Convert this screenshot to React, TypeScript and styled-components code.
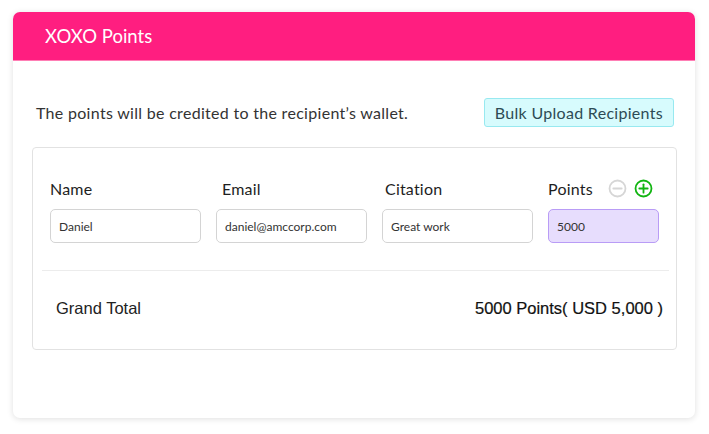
import styled, { createGlobalStyle } from "styled-components";

const GlobalStyle = createGlobalStyle`
  html, body {
    margin: 0;
    padding: 0;
    background: #ffffff;
  }
  body {
    font-family: Lato, "Noto Sans", sans-serif;
  }
`;

type Recipient = {
  name: string;
  email: string;
  citation: string;
  points: string;
};

const recipients: Recipient[] = [
  {
    name: "Daniel",
    email: "daniel@amccorp.com",
    citation: "Great work",
    points: "5000",
  },
];

function CircleIcon({ color, plus }: { color: string; plus?: boolean }) {
  return (
    <svg width="19" height="19" viewBox="0 0 20 20" fill="none">
      <circle cx="10" cy="10" r="8.4" stroke={color} strokeWidth="1.9" />
      <path d="M5.6 10h8.8" stroke={color} strokeWidth="1.9" strokeLinecap="round" />
      {plus && (
        <path d="M10 5.6v8.8" stroke={color} strokeWidth="1.9" strokeLinecap="round" />
      )}
    </svg>
  );
}

export default function App() {
  return (
    <Page>
      <GlobalStyle />
      <Card>
        <Header>XOXO Points</Header>
        <Body>
          <InfoRow>
            <Info>The points will be credited to the recipient’s wallet.</Info>
            <BulkButton>Bulk Upload Recipients</BulkButton>
          </InfoRow>
          <Panel>
            <Grid>
              <Label>Name</Label>
              <Label $shift={6}>Email</Label>
              <Label $shift={3}>Citation</Label>
              <PointsLabel>
                Points
                <Icons>
                  <CircleIcon color="#d6d6d6" />
                  <CircleIcon color="#12b512" plus />
                </Icons>
              </PointsLabel>
              {recipients.map((r) => [
                <Field key={r.email + "n"} defaultValue={r.name} />,
                <Field key={r.email + "e"} defaultValue={r.email} />,
                <Field key={r.email + "c"} defaultValue={r.citation} />,
                <Field key={r.email + "p"} defaultValue={r.points} $highlight />,
              ])}
            </Grid>
            <Divider />
            <TotalRow>
              <span>Grand Total</span>
              <Amount>5000 Points( USD 5,000 )</Amount>
            </TotalRow>
          </Panel>
        </Body>
      </Card>
    </Page>
  );
}

const Page = styled.div`
  padding: 12px 14px 16px 13px;
`;

const Card = styled.div`
  width: 682px;
  background: #fff;
  border-radius: 7px;
  overflow: hidden;
  box-shadow: 0 1px 6px rgba(0, 0, 0, 0.13);
`;

const Header = styled.div`
  height: 49px;
  background: #ff1e80;
  color: #fff;
  font-size: 18.5px;
  display: flex;
  align-items: center;
  padding-left: 32px;
  border-bottom: 1px solid #ff7fb5;
  box-sizing: border-box;
`;

const Body = styled.div`
  padding: 37px 18px 68px 19px;
`;

const InfoRow = styled.div`
  display: flex;
  justify-content: space-between;
  align-items: center;
  padding-left: 4px;
  padding-right: 3px;
`;

const Info = styled.p`
  margin: 0;
  font-size: 16px;
  letter-spacing: 0.3px;
  color: #333;
`;

const BulkButton = styled.button`
  height: 29px;
  padding: 0 10px;
  background: #d7fbfd;
  border: 1px solid #98e9f0;
  border-radius: 3px;
  font-family: Lato, "Noto Sans", sans-serif;
  font-size: 16px;
  letter-spacing: 0.3px;
  color: #2d4b55;
`;

const Panel = styled.div`
  margin-top: 20px;
  border: 1px solid #e2e2e2;
  border-radius: 4px;
  padding: 30px 7px 0 9px;
`;

const Grid = styled.div`
  display: grid;
  grid-template-columns: 151px 151px 151px 111px;
  column-gap: 15px;
  row-gap: 11px;
  padding-left: 8px;
`;

const Label = styled.div<{ $shift?: number }>`
  font-size: 16px;
  letter-spacing: 0.2px;
  color: #1e1e1e;
  height: 20px;
  display: flex;
  align-items: center;
  padding-left: ${({ $shift }) => $shift ?? 0}px;
`;

const PointsLabel = styled(Label)`
  gap: 15px;
`;

const Icons = styled.span`
  display: flex;
  gap: 7px;
  padding-top: 1px;
`;

const Field = styled.input<{ $highlight?: boolean }>`
  height: 34px;
  box-sizing: border-box;
  width: 100%;
  border: 1px solid ${({ $highlight }) => ($highlight ? "#b99cf6" : "#d4d4d4")};
  background: ${({ $highlight }) => ($highlight ? "#e7ddfd" : "#fff")};
  border-radius: 5px;
  padding: 0 8px;
  font-family: Lato, "Noto Sans", sans-serif;
  font-size: 12px;
  color: #333;
  outline: none;
`;

const Divider = styled.div`
  margin-top: 27px;
  height: 1px;
  background: #ececec;
`;

const TotalRow = styled.div`
  display: flex;
  justify-content: space-between;
  align-items: center;
  height: 74px;
  padding: 0 6px 4px 14px;
  font-family: "Liberation Sans", Arial, sans-serif;
  font-size: 16.5px;
  color: #222;
`;

const Amount = styled.span`
  color: #111;
  -webkit-text-stroke: 0.2px #111;
`;
